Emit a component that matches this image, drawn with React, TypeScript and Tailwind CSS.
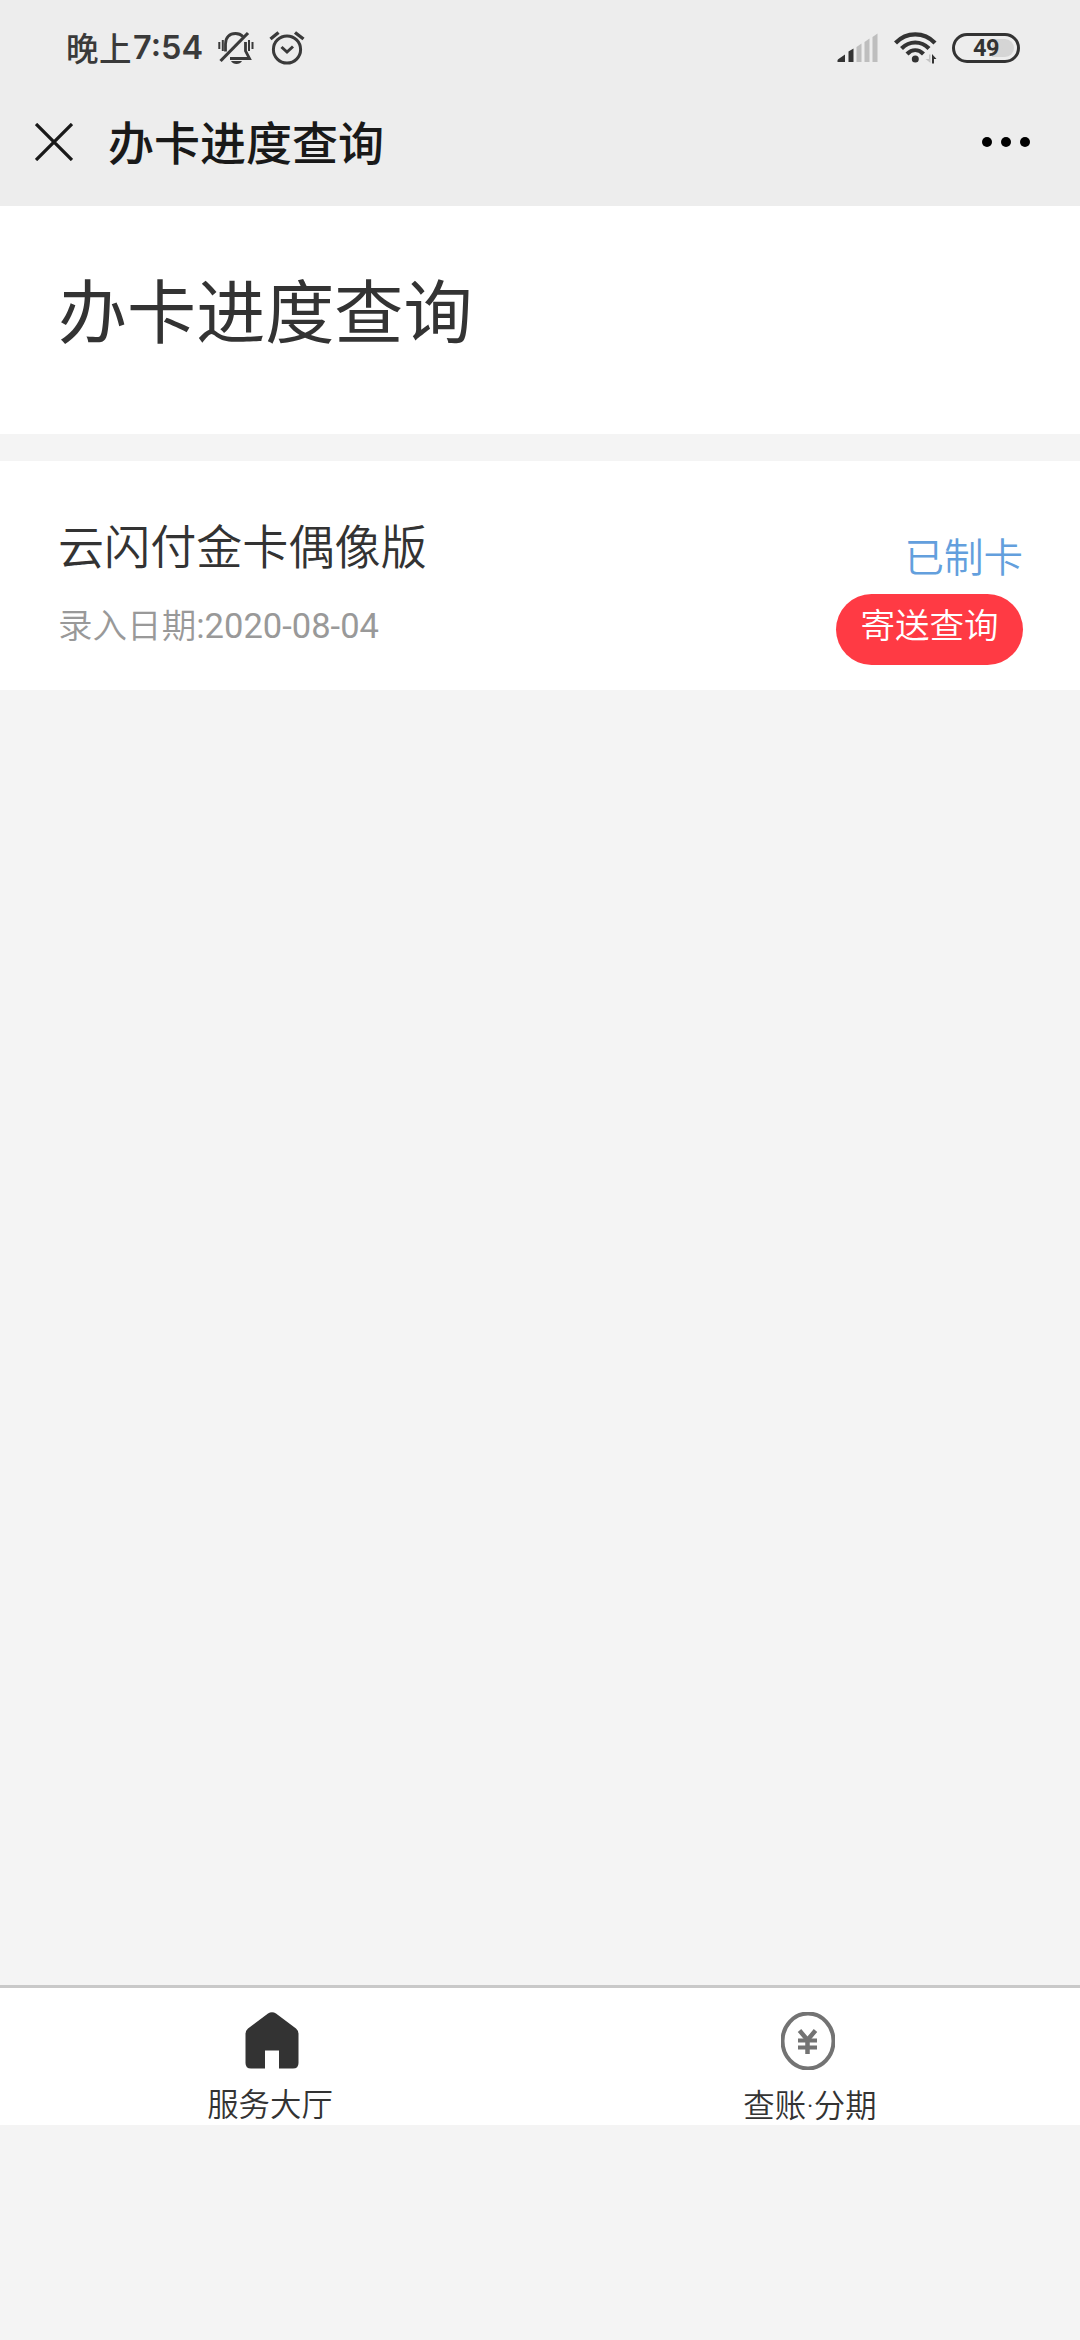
import React from 'react'

const tabs = [
  { label: '服务大厅', icon: <HomeIcon /> },
  { label: '查账·分期', icon: <YuanIcon /> },
]

function MutedBellIcon() {
  return (
    <svg width="36" height="34" viewBox="0 0 36 34" fill="none" stroke="#3a3a3a" strokeWidth="2.8">
      <path d="M7.5 20.500V13C7.500 6.500 11.500 2.500 17.500 2.500C20.500 2.500 23 3.500 25 5.500M27.500 11V20L31.500 27.500H12" />
      <path d="M2.500 30L30 2" strokeWidth="3.2" />
      <path d="M1.300 11V18M4.800 9V20M31 9V20M34.500 11V18" strokeWidth="2" />
      <path d="M13 30H24C22 34 15 34 13 30Z" fill="#3a3a3a" stroke="none" />
    </svg>
  )
}

function AlarmIcon() {
  return (
    <svg width="36" height="34" viewBox="0 0 36 34" fill="none" stroke="#3a3a3a" strokeWidth="3">
      <circle cx="18" cy="18.500" r="13.600" />
      <path d="M12.500 16L18 21L24 15.500" strokeWidth="3" />
      <path d="M1.500 8L9.500 1.500M26 1.500L34.500 8" strokeWidth="3.4" />
    </svg>
  )
}

function SignalIcon() {
  return (
    <svg width="42" height="30" viewBox="0 0 42 30">
      <path d="M0.500 29V27.500Q0.500 26.500 1.500 26L8 21.500V29Z" fill="#333" />
      <path d="M11.500 29V18.500L16.500 15.500V29Z" fill="#333" />
      <path d="M19.500 29V14L24.500 10.500V29Z" fill="#bebebe" />
      <path d="M27.500 29V9L32.500 5.500V29Z" fill="#bebebe" />
      <path d="M35.500 29V4L40.500 0.500V29Z" fill="#bebebe" />
    </svg>
  )
}

function WifiIcon() {
  return (
    <svg width="44" height="34" viewBox="0 0 44 34" fill="none" stroke="#333" strokeWidth="4.200">
      <path d="M1.500 12C12.500 0.500 30 0.500 41 12" />
      <path d="M7.500 17.500C15.500 9.500 27 9.500 35 17.500" />
      <path d="M13 23C18 18 24.500 18 29.500 23" />
      <circle cx="21.300" cy="28" r="3.500" fill="#333" stroke="none" />
      <path d="M36.500 23.500V32L31.500 28H35V23.500Z" fill="#c4c4c4" stroke="none" />
      <path d="M38 32.500V23L42.500 28H40V32.500Z" fill="#333" stroke="none" />
    </svg>
  )
}

function CloseIcon() {
  return (
    <svg width="38" height="38" viewBox="0 0 38 38" fill="none" stroke="#191919" strokeWidth="3.300">
      <path d="M1 1L37 37M37 1L1 37" />
    </svg>
  )
}

function HomeIcon() {
  return (
    <svg className="ml-[3px]" width="54" height="57" viewBox="0 0 54 57" fill="#333">
      <path d="M23 1.500Q27 -0.800 31 1.500L51 16.500Q53.500 18.500 53.500 22V51Q53.500 56.500 48 56.500H34V38.500H20V56.500H6Q0.500 56.500 0.500 51V22Q0.500 18.500 3 16.500Z" />
    </svg>
  )
}

function YuanIcon() {
  return (
    <svg className="mr-[4px]" width="54" height="58" viewBox="0 0 54 58" fill="none" stroke="#737373">
      <ellipse cx="27" cy="29" rx="25.500" ry="27.500" strokeWidth="4" />
      <path d="M18.500 18.500L26.500 28L34.500 18.500M26.500 27V42" strokeWidth="4.5" />
      <path d="M17 28.500H36M17 35.500H36" strokeWidth="4" />
    </svg>
  )
}

function StatusBar() {
  return (
    <div className="flex h-[96px] items-center justify-between pl-[66px] pr-[60px]">
      <div className="flex items-center">
        <div className="flex items-center text-[#3a3a3a]">
          <span className="w-[67px] pb-[2px] text-[32.500px] leading-[40px] font-medium tracking-[0.5px]">晚上</span>
          <span className="w-[70px] font-['Inter',sans-serif] text-[32.500px] leading-[40px] font-semibold">7:54</span>
        </div>
        <div className="ml-[15px] flex gap-[15px]">
          <MutedBellIcon />
          <AlarmIcon />
        </div>
      </div>
      <div className="flex items-center">
        <SignalIcon />
        <div className="ml-[15px]">
          <WifiIcon />
        </div>
        <div className="ml-[14px] flex h-[30px] w-[68px] items-center rounded-full border-[3px] border-[#333] p-[3px]">
          <div className="flex h-full w-full items-center justify-center rounded-full bg-linear-to-r from-transparent from-60% to-[#d5d5d5] to-60% pt-[2px] font-['Roboto',sans-serif] text-[23.5px] leading-none font-bold tracking-[-0.5px] text-[#333]">
            49
          </div>
        </div>
      </div>
    </div>
  )
}

function NavBar() {
  return (
    <div className="flex h-[110px] items-center justify-between pb-[18px] pl-[35px] pr-[50px]">
      <div className="flex items-center">
        <CloseIcon />
        <h1 className="ml-[35px] pb-[4px] text-[46px] leading-[60px] font-medium text-[#191919]">办卡进度查询</h1>
      </div>
      <div className="flex gap-[9px]">
        <span className="size-[10px] rounded-full bg-black" />
        <span className="size-[10px] rounded-full bg-black" />
        <span className="size-[10px] rounded-full bg-black" />
      </div>
    </div>
  )
}

const App = () => {
  return (
    <div className="flex h-[2340px] w-[1080px] flex-col bg-[#f4f4f4] font-['Noto_Sans_CJK_SC',sans-serif] text-[#333]">
      <header className="bg-[#ededed]">
        <StatusBar />
        <NavBar />
      </header>

      <section className="h-[228px] bg-white px-[58px] pt-[52px]">
        <h2 className="text-[69.100px] leading-[100px]">办卡进度查询</h2>
      </section>

      <section className="mt-[27px] flex h-[229px] justify-between bg-white pl-[58px] pr-[57px]">
        <div className="pt-[53px]">
          <p className="text-[46.100px] leading-[60px] font-[350]">云闪付金卡偶像版</p>
          <p className="mt-[27px] font-['Roboto','Noto_Sans_CJK_SC',sans-serif] text-[34.560px] leading-[50px] text-[#999]">
            <span className="font-[350]">录入日期</span>:2020-08-04
          </p>
        </div>
        <div className="flex flex-col items-end pt-[68px]">
          <span className="text-[39.500px] leading-[52px] font-[350] text-[#639fdd]">已制卡</span>
          <button className="mt-[13px] h-[71px] w-[187px] rounded-full bg-[#ff3a44] pb-[13px] text-[34.560px] leading-[58px] font-[350] text-white">
            寄送查询
          </button>
        </div>
      </section>

      <nav className="mt-auto mb-[215px] flex h-[140px] border-t-[3px] border-[#c9c9c9] bg-white">
        {tabs.map((tab) => (
          <div key={tab.label} className="flex flex-1 flex-col items-center pt-[24px]">
            <div className="h-[58px]">{tab.icon}</div>
            <span className="mt-[15px] font-['Roboto','Noto_Sans_CJK_SC',sans-serif] text-[31.400px] leading-[44px] font-[350]">
              {tab.label}
            </span>
          </div>
        ))}
      </nav>
    </div>
  )
}

export default App
